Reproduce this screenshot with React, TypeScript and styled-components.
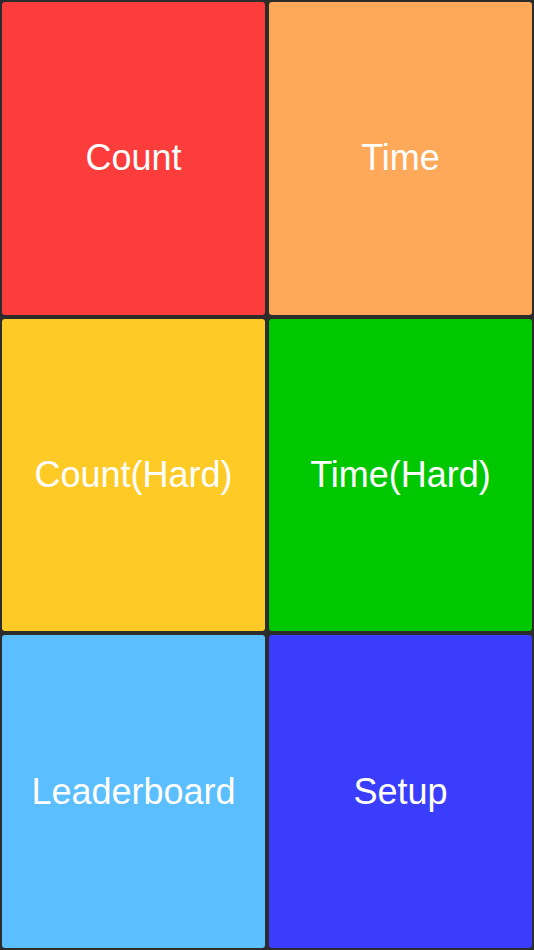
import React from 'react';
import styled, { createGlobalStyle } from 'styled-components';

const GlobalStyle = createGlobalStyle`
  html, body {
    margin: 0;
    padding: 0;
    height: 100%;
    background: #2c2c2c;
  }
  #root {
    height: 100%;
  }
`;

const Grid = styled.main`
  box-sizing: border-box;
  height: 100vh;
  padding: 2px;
  display: grid;
  grid-template-columns: 1fr 1fr;
  grid-template-rows: repeat(3, 1fr);
  gap: 4px;
  background: #2c2c2c;
`;

const Tile = styled.button<{ $bg: string }>`
  border: none;
  margin: 0;
  border-radius: 3px;
  background: ${(p) => p.$bg};
  color: #ffffff;
  font-family: 'Liberation Sans', Arial, sans-serif;
  font-size: 36px;
  display: flex;
  align-items: center;
  justify-content: center;
  cursor: pointer;
`;

const tiles = [
  { label: 'Count', bg: '#fd3c3c' },
  { label: 'Time', bg: '#fea95a' },
  { label: 'Count(Hard)', bg: '#fecb26' },
  { label: 'Time(Hard)', bg: '#00c800' },
  { label: 'Leaderboard', bg: '#5bbefe' },
  { label: 'Setup', bg: '#3b3dfd' },
];

const App = () => {
  return (
    <>
      <GlobalStyle />
      <Grid>
        {tiles.map((t) => (
          <Tile key={t.label} type="button" $bg={t.bg}>
            {t.label}
          </Tile>
        ))}
      </Grid>
    </>
  );
};

export default App;
